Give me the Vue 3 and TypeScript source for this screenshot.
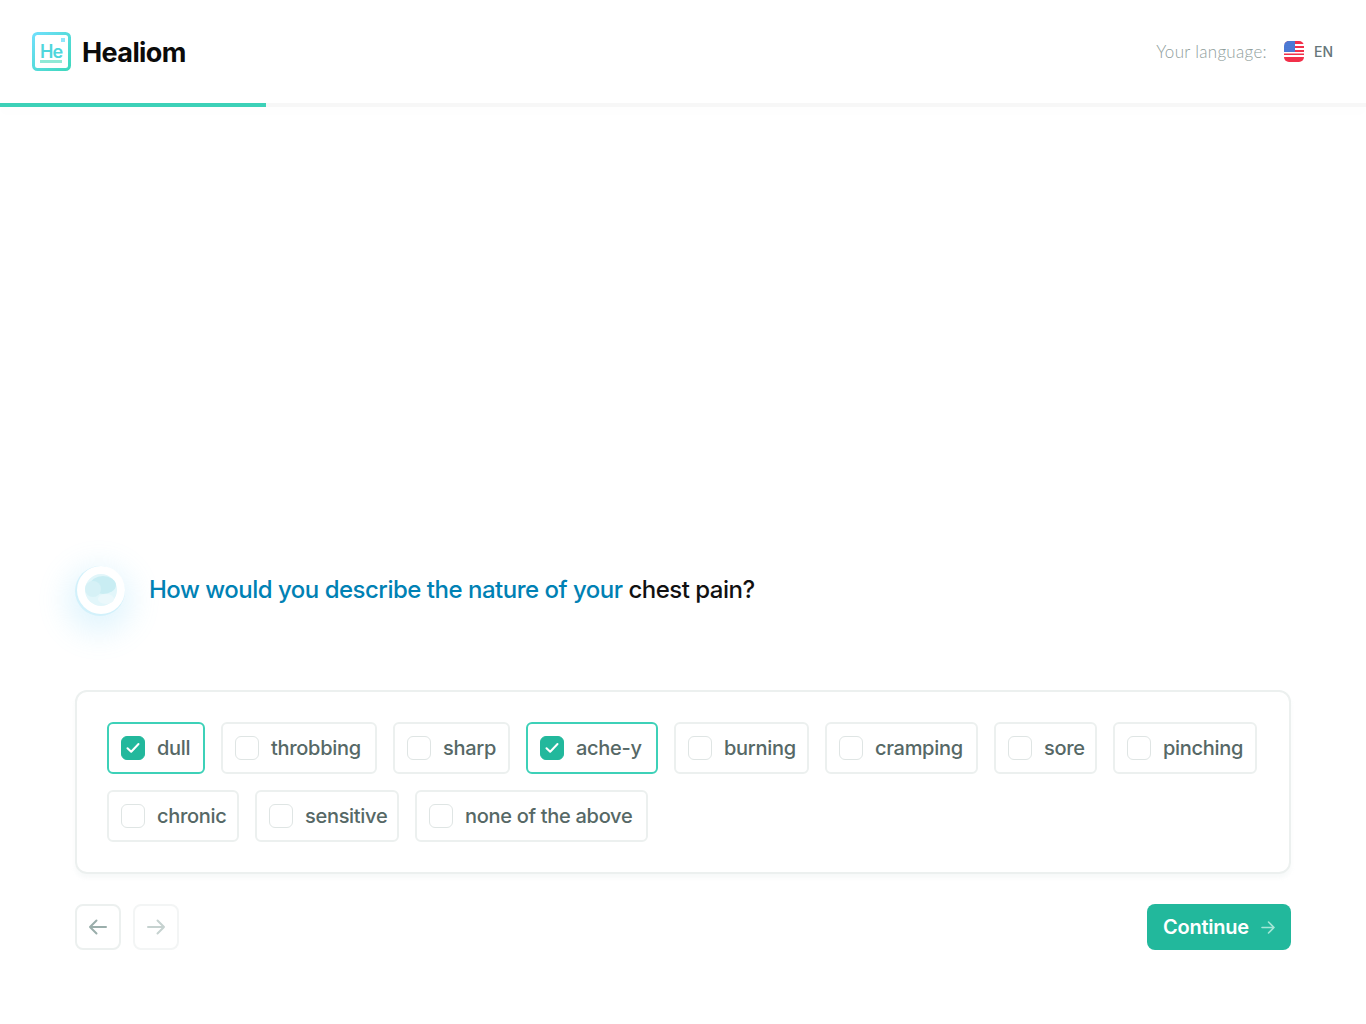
<script setup lang="ts">
interface Option { label: string; checked: boolean; width: number }
const rows: Option[][] = [
  [
    { label: 'dull', checked: true, width: 98 },
    { label: 'throbbing', checked: false, width: 156 },
    { label: 'sharp', checked: false, width: 117 },
    { label: 'ache-y', checked: true, width: 132 },
    { label: 'burning', checked: false, width: 135 },
    { label: 'cramping', checked: false, width: 153 },
    { label: 'sore', checked: false, width: 103 },
    { label: 'pinching', checked: false, width: 144 },
  ],
  [
    { label: 'chronic', checked: false, width: 132 },
    { label: 'sensitive', checked: false, width: 144 },
    { label: 'none of the above', checked: false, width: 233 },
  ],
]
</script>

<template>
  <div class="page">
    <header class="header">
      <div class="brand">
        <svg class="logo" width="40" height="40" viewBox="0 0 40 40" fill="none">
          <defs>
            <linearGradient id="lg" x1="0" y1="0" x2="1" y2="1">
              <stop offset="0" stop-color="#6fdffb" />
              <stop offset="1" stop-color="#3fd8bd" />
            </linearGradient>
          </defs>
          <rect x="1.5" y="1.5" width="36" height="36" rx="4" stroke="url(#lg)" stroke-width="3" fill="#fff" />
          <rect x="29" y="6" width="4" height="4" fill="#8fe6fb" />
          <rect x="8" y="28" width="22" height="3" fill="#8fe9d6" />
          <text x="8" y="26" class="logo-he">He</text>
        </svg>
        <span class="brand-name">Healiom</span>
      </div>
      <div class="lang">
        <span class="lang-label">Your language:</span>
        <svg class="flag" width="20" height="21" viewBox="0 0 20 21">
          <defs>
            <clipPath id="fc"><rect width="20" height="21" rx="5" /></clipPath>
            <pattern id="st" width="2" height="2" patternUnits="userSpaceOnUse">
              <rect width="2" height="2" fill="#3f6fd0" />
              <circle cx="1" cy="1" r="0.45" fill="#a9c1ee" />
            </pattern>
          </defs>
          <g clip-path="url(#fc)">
            <rect width="20" height="21" fill="#fff" />
            <rect y="0" width="20" height="3" fill="#f2304a" />
            <rect y="5" width="20" height="2" fill="#f2304a" />
            <rect y="9" width="20" height="2" fill="#f2304a" />
            <rect y="12.5" width="20" height="1.5" fill="#f2304a" />
            <rect y="16" width="20" height="5" fill="#f2304a" />
            <rect width="11" height="11" fill="url(#st)" />
          </g>
        </svg>
        <span class="lang-code">EN</span>
      </div>
    </header>
    <div class="progress"><div class="progress-fill"></div></div>

    <main class="main">
      <div class="question">
        <div class="orb">
          <svg width="36" height="36" viewBox="0 0 36 36">
            <circle cx="18" cy="18" r="16" fill="#e2f6fa" />
            <ellipse cx="20" cy="13" rx="13" ry="9" fill="#c9edf3" />
            <ellipse cx="10" cy="17" rx="8" ry="8" fill="#d6f1f6" />
            <ellipse cx="23" cy="27" rx="8" ry="5" fill="#ebf8fb" />
          </svg>
        </div>
        <h1 class="title">How would you describe the nature of your <span class="title-dark">chest pain?</span></h1>
      </div>

      <section class="card">
        <div v-for="(row, i) in rows" :key="i" class="row">
          <label
            v-for="opt in row"
            :key="opt.label"
            class="chip"
            :class="{ on: opt.checked }"
            :style="{ width: opt.width + 'px' }"
          >
            <span class="box">
              <svg v-if="opt.checked" width="14" height="12" viewBox="0 0 14 12" fill="none">
                <path d="M1.5 6.2 L5.2 9.8 L12.5 2" stroke="#fff" stroke-width="2" stroke-linecap="round" stroke-linejoin="round" />
              </svg>
            </span>
            <span class="chip-text">{{ opt.label }}</span>
          </label>
        </div>
      </section>

      <div class="nav">
        <div class="nav-left">
          <button class="nav-btn">
            <svg width="20" height="16" viewBox="0 0 20 16" fill="none">
              <path d="M18 8 H2 M8.5 1.5 L2 8 L8.5 14.5" stroke="#9aaeab" stroke-width="2" stroke-linecap="round" stroke-linejoin="round" />
            </svg>
          </button>
          <button class="nav-btn faint">
            <svg width="20" height="16" viewBox="0 0 20 16" fill="none">
              <path d="M2 8 H18 M11.5 1.5 L18 8 L11.5 14.5" stroke="#c6d2d0" stroke-width="2" stroke-linecap="round" stroke-linejoin="round" />
            </svg>
          </button>
        </div>
        <button class="continue">
          <span>Continue</span>
          <svg width="14" height="13" viewBox="0 0 14 13" fill="none">
            <path d="M1 6.5 H13 M7.5 1 L13 6.5 L7.5 12" stroke="#a5e6d6" stroke-width="1.6" stroke-linecap="round" stroke-linejoin="round" />
          </svg>
        </button>
      </div>
    </main>
  </div>
</template>

<style>
html, body { margin: 0; background: #fff; }
</style>

<style scoped>
.page {
  height: 1024px;
  display: flex;
  flex-direction: column;
  font-family: "Lato", "Noto Sans", sans-serif;
  background: #fff;
  overflow: hidden;
}
.header {
  height: 103px;
  box-sizing: border-box;
  padding: 0 32px;
  display: flex;
  align-items: center;
  justify-content: space-between;
}
.brand { display: flex; align-items: center; gap: 10px; }
.logo { display: block; margin-top: 1px; }
.logo-he { font: 600 18px "Inter", sans-serif; fill: #4fd6dc; letter-spacing: -0.8px; }
.brand-name { font: 700 27px/1 "Inter", sans-serif; color: #0b0b0b; letter-spacing: -0.6px; padding-top: 2px; }
.lang { display: flex; align-items: center; }
.lang-label { font-size: 17px; font-weight: 300; letter-spacing: 0.3px; color: #8f9e9c; margin-right: 17px; }
.flag { display: block; margin-right: 10px; }
.lang-code { font: 500 14px "Inter", sans-serif; color: #66767a; padding-right: 1px; }
.progress {
  height: 4px;
  background: #f7f7f7;
  box-shadow: 0 5px 8px rgba(0, 0, 0, 0.018);
}
.progress-fill { width: 266px; height: 4px; background: #3dd1b8; }
.main {
  flex: 1;
  display: flex;
  flex-direction: column;
  justify-content: flex-end;
  padding: 0 75px 74px;
}
.question {
  display: flex;
  align-items: center;
  gap: 24px;
  height: 52px;
  margin-bottom: 74px;
}
.orb {
  width: 48px;
  height: 48px;
  margin-left: 2px;
  border-radius: 50%;
  background: #fff;
  display: flex;
  align-items: center;
  justify-content: center;
  box-shadow: -1px 1px 0 1px #d2f1fb, -2px 10px 30px 9px rgba(110, 205, 245, 0.2);
  flex: none;
}
.title {
  margin: 0 0 1px;
  font-size: 24px;
  font-weight: 500;
  color: #0081b4;
  font-family: "Inter", sans-serif;
  letter-spacing: -0.5px;
}
.title-dark { color: #111; }
.card {
  height: 184px;
  box-sizing: border-box;
  border: 2px solid #ecf0ef;
  border-radius: 12px;
  padding: 30px;
  display: flex;
  flex-direction: column;
  gap: 16px;
  box-shadow: 0 4px 4px rgba(200, 215, 212, 0.14);
}
.row { display: flex; gap: 16px; }
.chip {
  height: 52px;
  box-sizing: border-box;
  border: 2px solid #ecf0ef;
  border-radius: 6px;
  padding: 0 0 0 12px;
  display: flex;
  align-items: center;
  gap: 12px;
  color: #566866;
  font: 500 20px "Inter", sans-serif;
  letter-spacing: -0.3px;
  white-space: nowrap;
}
.chip.on { border-color: #3dd1b8; }
.box {
  width: 24px;
  height: 24px;
  box-sizing: border-box;
  border: 1px solid #dfe5e4;
  border-radius: 6px;
  display: flex;
  align-items: center;
  justify-content: center;
  flex: none;
}
.on .box { background: #22b89c; border-color: #22b89c; }
.nav {
  margin-top: 30px;
  display: flex;
  justify-content: space-between;
  align-items: center;
}
.nav-left { display: flex; gap: 12px; }
.nav-btn {
  width: 46px;
  height: 46px;
  padding: 0;
  background: #fff;
  border: 2px solid #ecf0ef;
  border-radius: 8px;
  display: flex;
  align-items: center;
  justify-content: center;
}
.nav-btn.faint { border-color: #f3f5f5; }
.continue {
  width: 144px;
  height: 46px;
  padding: 0 0 0 16px;
  border: none;
  border-radius: 8px;
  background: #22b89c;
  color: #fff;
  font: 600 20px "Inter", sans-serif;
  letter-spacing: -0.25px;
  display: flex;
  align-items: center;
  gap: 12px;
}
</style>
